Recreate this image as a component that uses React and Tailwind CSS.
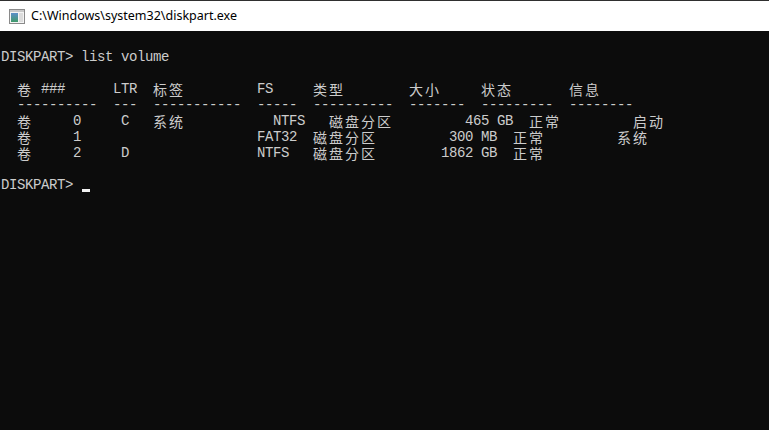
import React from 'react';

const isWide = (ch) => /[\u3000-\u9fff\uff00-\uffef]/.test(ch);

// each line: list of [column, text]; console cells are 8px, CJK takes two
const lines = [
  [],
  [[0, 'DISKPART> list volume']],
  [],
  [[2, '卷'], [5, '###'], [14, 'LTR'], [19, '标签'], [32, 'FS'], [39, '类型'], [51, '大小'], [60, '状态'], [71, '信息']],
  [[2, '----------'], [14, '---'], [19, '-----------'], [32, '-----'], [39, '----------'], [51, '-------'], [60, '---------'], [71, '--------']],
  [[2, '卷'], [9, '0'], [15, 'C'], [19, '系统'], [34, 'NTFS'], [41, '磁盘分区'], [58, '465'], [62, 'GB'], [66, '正常'], [79, '启动']],
  [[2, '卷'], [9, '1'], [32, 'FAT32'], [39, '磁盘分区'], [56, '300'], [60, 'MB'], [64, '正常'], [77, '系统']],
  [[2, '卷'], [9, '2'], [15, 'D'], [32, 'NTFS'], [39, '磁盘分区'], [55, '1862'], [60, 'GB'], [64, '正常']],
  [],
];

const ConsoleLine = ({ segments, cursor }) => {
  const cells = [];
  let col = 0;
  segments.forEach(([start, text], si) => {
    if (start > col) {
      cells.push(<span key={`pad${si}`} className="shrink-0" style={{ width: (start - col) * 8 }} />);
      col = start;
    }
    Array.from(text).forEach((ch, ci) => {
      const wide = isWide(ch);
      cells.push(
        <span
          key={`${si}-${ci}`}
          className={
            wide
              ? 'w-[16px] h-[16px] shrink-0 text-[14px] leading-[16px] font-["Noto_Sans_CJK_SC",sans-serif]'
              : 'w-[8px] h-[16px] shrink-0 text-[14px] leading-[16px] font-["Liberation_Mono",monospace]'
          }
        >
          {ch === ' ' ? '\u00a0' : ch}
        </span>
      );
      col += wide ? 2 : 1;
    });
  });
  return (
    <div className="flex h-[16px] items-center whitespace-pre">
      {cells}
      {cursor && (
        <span className="w-[8px] h-[16px] shrink-0 flex items-end pb-[1px] ml-[1px]">
          <span className="block w-[8px] h-[3px] bg-[#f2f2f2]" />
        </span>
      )}
    </div>
  );
};

const WindowIcon = () => (
  <svg width="16" height="15" viewBox="0 0 16 15" className="shrink-0">
    <defs>
      <linearGradient id="pane" x1="0" y1="0" x2="0" y2="1">
        <stop offset="0" stopColor="#5c8fc9" />
        <stop offset="1" stopColor="#3f9a6a" />
      </linearGradient>
    </defs>
    <rect x="0.5" y="0.5" width="15" height="14" fill="#f4f4f4" stroke="#8a8a8a" />
    <rect x="1" y="1" width="14" height="2" fill="#c9c9c9" />
    <rect x="2" y="4" width="7" height="9" fill="url(#pane)" />
    <rect x="10" y="4" width="4" height="9" fill="#dcdcdc" />
  </svg>
);

const App = () => {
  return (
    <div className="w-[769px] h-[430px] flex flex-col bg-[#0c0c0c] overflow-hidden">
      <div className="h-[31px] shrink-0 bg-white border-t border-[#2f2f2f] flex items-center pl-[9px] gap-[6px]">
        <WindowIcon />
        <span className="text-[12.5px] text-black font-['Noto_Sans',sans-serif] leading-none">
          C:\Windows\system32\diskpart.exe
        </span>
      </div>
      <div className="flex-1 border-l border-[#4d4d4d] text-[#cccccc] -ml-px pl-px pt-[2px]">
        {lines.map((segs, i) => (
          <ConsoleLine key={i} segments={segs} />
        ))}
        <ConsoleLine segments={[[0, 'DISKPART> ']]} cursor />
      </div>
    </div>
  );
};

export default App;
